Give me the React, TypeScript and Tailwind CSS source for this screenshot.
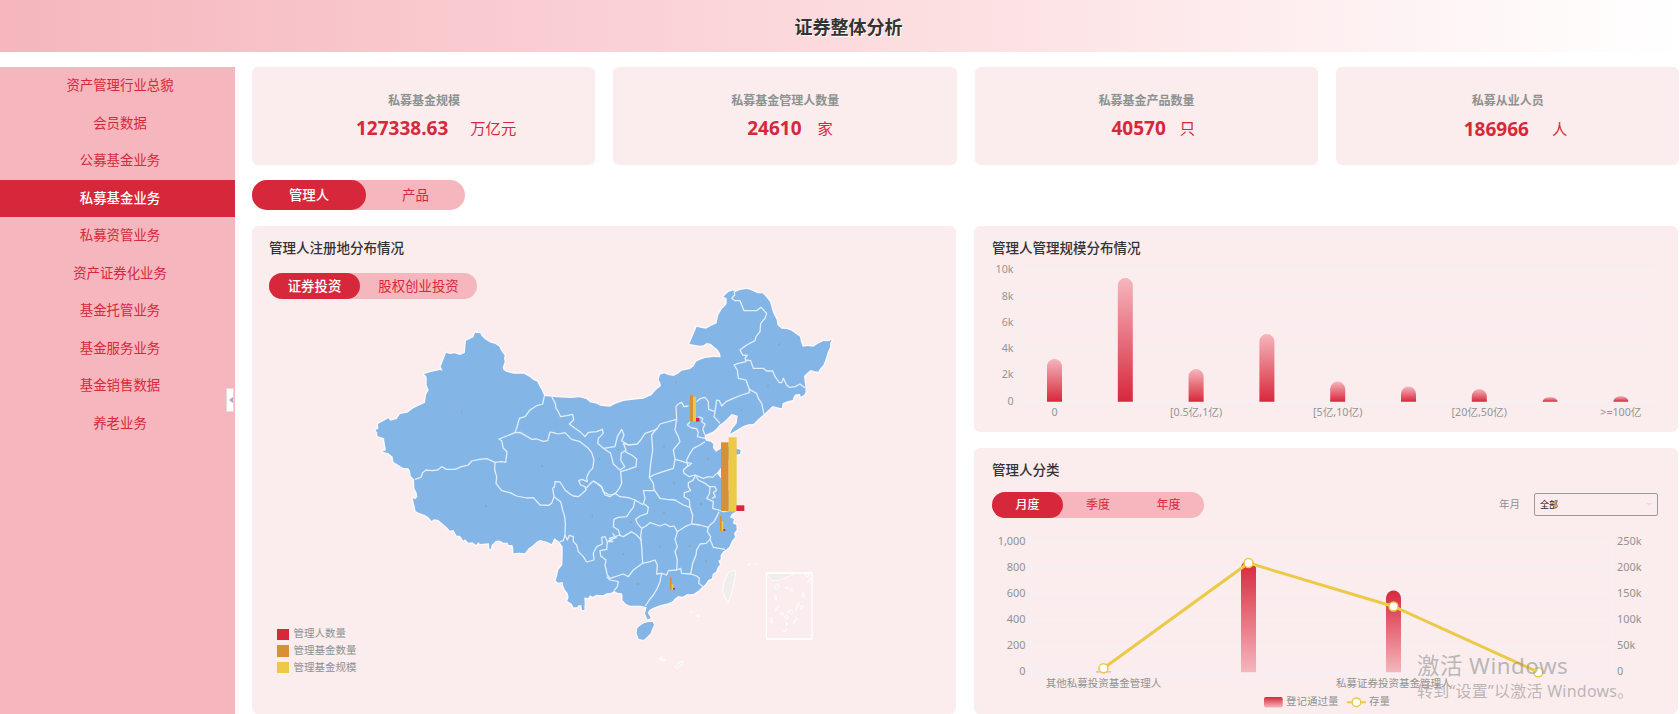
import { useState } from "react";
import clsx from "clsx";

const NAV_ITEMS = [
  "资产管理行业总貌",
  "会员数据",
  "公募基金业务",
  "私募基金业务",
  "私募资管业务",
  "资产证券化业务",
  "基金托管业务",
  "基金服务业务",
  "基金销售数据",
  "养老业务",
];

const STATS = [
  { title: "私募基金规模", value: "127338.63", unit: "万亿元", row: "pl-[104px] gap-[22px]" },
  { title: "私募基金管理人数量", value: "24610", unit: "家", row: "pl-[134px] gap-[16px]" },
  { title: "私募基金产品数量", value: "40570", unit: "只", row: "pl-[137px] gap-[14px]" },
  { title: "私募从业人员", value: "186966", unit: "人", row: "pl-[128px] pt-px gap-[23px]" },
];

// Map geometry uses its own units, three per screen pixel.
const MAINLAND =
  "315,188 331,190 335,198 345,208 362,218 375,221 388,230 394,243 404,256 402,265 404,275 398,292 400,299 408,305 430,311 462,311 480,322 490,330 502,335 508,348 515,360 523,378 560,382 600,384 630,382 650,388 660,397 680,401 690,407 720,410 735,402 760,393 790,389 820,386 845,375 853,365 860,358 873,348 871,338 866,330 870,314 882,310 895,315 910,318 924,311 935,302 960,297 971,289 978,275 990,269 1005,264 1030,261 1052,262 1050,250 1042,238 1032,230 1022,221 1010,219 1000,226 990,227 972,224 958,222 964,208 972,190 980,170 992,173 1008,176 1022,168 1040,160 1042,148 1045,135 1055,118 1070,102 1070,85 1060,80 1075,66 1092,60 1096,66 1110,60 1130,57 1140,59 1150,64 1163,70 1178,70 1188,80 1200,95 1205,114 1210,130 1220,150 1222,165 1235,176 1250,177 1265,182 1278,192 1290,200 1292,212 1298,230 1314,228 1330,230 1342,222 1360,213 1372,214 1385,210 1380,220 1380,232 1372,250 1366,270 1360,285 1350,296 1345,305 1334,304 1322,300 1312,308 1302,318 1304,336 1307,355 1306,368 1302,375 1292,380 1290,372 1278,373 1272,378 1268,390 1252,394 1238,400 1235,415 1222,412 1208,408 1195,420 1182,433 1165,447 1150,462 1135,463 1120,468 1100,480 1080,492 1086,478 1100,460 1103,437 1085,432 1070,448 1058,458 1048,465 1038,478 1028,485 1005,495 1004,503 1008,512 1022,515 1030,522 1029,534 1038,545 1052,536 1062,528 1080,530 1100,536 1112,540 1110,552 1090,556 1070,575 1055,590 1046,602 1040,610 1053,625 1060,640 1072,655 1085,680 1095,705 1098,724 1085,733 1080,742 1092,748 1088,760 1099,765 1100,780 1092,790 1095,802 1086,812 1078,830 1070,838 1060,844 1052,855 1052,868 1045,872 1050,884 1043,892 1038,905 1028,912 1026,925 1015,930 1005,944 994,953 985,962 970,972 950,973 938,980 925,978 912,988 910,992 895,1000 872,1005 850,1013 838,1020 833,1028 843,1045 832,1048 825,1030 830,1012 812,1007 780,1007 768,1002 757,990 758,978 755,970 742,968 732,962 724,968 710,970 700,976 680,974 668,980 660,976 654,985 643,982 644,1000 643,1020 636,1020 634,1006 625,1006 622,1012 610,1012 606,1002 592,993 596,982 593,970 584,958 580,948 578,936 565,938 557,932 562,915 565,900 577,885 578,860 578,830 568,815 560,810 553,805 545,822 530,815 510,810 500,815 490,825 476,835 465,850 448,848 430,850 430,835 427,825 415,825 413,818 400,818 390,812 378,812 365,825 362,838 358,836 357,820 330,822 325,817 318,825 308,817 295,818 285,808 280,812 270,797 260,797 250,780 240,782 232,773 220,763 205,750 192,748 185,753 175,742 165,735 148,729 137,724 133,705 128,685 136,688 142,680 140,668 133,655 132,628 122,618 120,602 115,595 100,594 90,588 70,575 68,560 55,550 38,545 48,540 45,525 42,505 22,498 22,488 16,480 25,476 24,462 40,453 55,445 62,452 80,447 90,432 112,428 130,415 165,398 168,375 176,360 170,345 170,320 162,312 185,305 210,300 218,302 212,290 220,270 228,248 240,252 254,250 270,255 285,248 286,230 288,212 310,202";

const HAINAN =
  "822,1060 835,1056 848,1056 852,1064 846,1078 842,1090 828,1104 820,1110 806,1106 800,1090 802,1074 812,1066";

const TAIWAN = "1088,902 1097,903 1096,920 1088,955 1082,980 1073,1000 1066,984 1058,965 1060,940 1070,915 1078,905";

const BORDERS = [
  "135,628 153,622 158,608 168,600 185,602 203,600 215,590 230,598 255,598 275,590 295,585 305,573 328,568 350,566 375,577 395,575 407,577 411,545 400,535 395,512 387,507 410,498 435,488 442,468 448,445 465,440 480,420 500,407 518,402 523,378",
  "435,488 450,487 462,494 485,508 500,507 520,514 533,512 540,486 550,488 565,492 585,488 605,508 630,515 655,535 665,548 672,570 668,595 658,605 650,622 652,635 636,628 626,632 632,645 645,650 648,660 635,672 625,680 610,678 600,672 585,660 578,648 570,636 555,635 554,650 548,655 552,680 545,700 535,706 510,705 490,683 470,684 440,678 420,668 395,662 378,640 380,620 374,600 375,577",
  "545,380 556,400 558,415 565,425 572,440 590,437 608,433 611,450 598,462 615,475 630,485 645,500 655,487 680,485 697,478 700,490 685,505 683,520 700,535 735,530",
  "700,535 722,550 730,582 750,600 764,590 752,570 754,550 768,540 760,520 775,525 802,522 812,510 825,490 860,478 870,462 920,448",
  "735,530 742,500 755,478 762,495 755,512 775,525",
  "765,545 785,555 800,567 798,590 775,598 752,605 755,640 748,655 735,672 718,675 700,665 695,652 680,640 670,633 660,642 648,655",
  "670,633 690,645 695,650 705,675 720,680 735,670 750,680 775,683 795,690 790,712 780,725 770,740 745,742 732,748 730,770 745,780 750,795 735,800 728,790",
  "860,475 845,495 848,540 842,580 838,622 850,640 852,658 870,685 890,688 915,690 940,705 960,712 968,735 965,762",
  "838,622 850,615 870,608 910,595 915,568 910,540 930,515 925,500 915,480 920,448 918,410 925,402 935,397 942,410 955,408",
  "980,395 990,386 1005,382 1015,395 1016,418 1035,425 1032,440 1050,460",
  "1035,425 1040,390 1048,392 1055,408 1068,395 1090,385 1115,375 1138,368 1138,358",
  "915,568 930,572 948,578 965,580 952,590",
  "1005,515 990,525 970,535 960,550 950,570 953,588 940,600 942,610 958,620 975,615 1000,625 1015,620 1028,622 1040,610",
  "975,620 968,632 955,638 955,650 962,662 943,668 942,680 958,690 960,712",
  "975,615 985,630 1005,640 1020,652 1018,672 1010,685 1030,695 1028,715 1045,720 1060,725 1075,722 1098,722",
  "1020,650 1035,650 1040,662 1030,668 1036,680 1025,685",
  "965,762 990,765 1015,772 1020,765 1032,755 1040,740 1047,725",
  "1015,772 1012,785 1022,800 1020,808 1030,832 1065,838",
  "1020,808 1008,820 990,822 980,840 978,855 968,880 962,912",
  "853,662 820,662 825,685 820,700 835,712 832,730 810,738 797,748 802,760 815,775",
  "795,690 820,705",
  "815,775 828,768 840,758 870,768 885,762 900,770 912,768 922,785 945,770 965,762",
  "815,775 812,800 815,830 818,880 840,875 855,870 862,885 860,912 875,910 870,935 862,955 850,975 838,990 826,1008",
  "922,785 918,800 915,808 922,830 915,845 922,870 920,900 895,902 890,915 875,910",
  "920,900 932,895 935,910 962,912 980,918 988,925 986,940 1000,950",
  "745,795 760,800 785,785 800,795 815,812",
  "740,802 725,808 712,815 710,838 690,842 692,858 708,870 705,885 712,915 720,925 760,912 775,920 790,900 818,880",
  "710,920 720,930 745,935 742,950 732,962",
  "735,800 718,805 728,815 712,815 705,800 695,802 697,822 680,830 670,850 672,870 650,876 640,860 625,845 620,825 610,815 610,800 598,796 592,810 585,795",
  "552,680 572,695 578,720 584,740 586,760 585,795 580,812 570,815",
  "1092,60 1094,75 1085,85 1095,92 1110,92 1122,122 1160,122 1173,112 1190,130 1185,145 1172,160 1170,185 1158,200 1155,212 1130,225 1110,240 1118,255 1132,256 1125,264 1128,275 1105,280 1092,285 1102,300 1105,325 1128,330 1138,358 1160,370 1165,385 1175,400 1182,433",
  "1126,270 1142,272 1150,295 1180,295 1190,303 1208,303 1215,320 1228,338 1235,338 1240,325 1250,345 1258,352 1275,350 1290,342 1307,355",
  "960,455 952,465 965,474 980,476 985,488 982,500 1005,505",
  "985,440 998,445 995,455 1005,462 998,478 1005,495",
];

// x, y, width, height in map units
const MAP_BARS = [
  { orange: [960, 376, 10, 78], yellow: [969, 380, 9, 74], red: [978, 444, 10, 11] },
  { orange: [1053, 517, 23, 206], yellow: [1076, 502, 24, 221], red: [1099, 706, 24, 17] },
  { orange: [1050, 738, 5, 45], yellow: [1055, 754, 5, 29], red: [1060, 777, 6, 6] },
  { orange: [900, 922, 5, 37], yellow: [905, 942, 5, 17], red: [909, 954, 6, 5] },
];

const MAP_DOTS = [
  [276, 425], [517, 588], [688, 567], [667, 737], [348, 708], [745, 540], [882, 530], [805, 601],
  [912, 640], [1013, 566], [1042, 665], [993, 702], [882, 728], [782, 756], [870, 829], [959, 828],
  [1009, 874], [760, 852], [804, 942], [825, 1077], [1228, 223], [1194, 349], [1114, 420], [918, 337], [994, 477],
];

const ISLETS = [
  "1214,948 1226,942 1228,950 1218,958 1214,956",
  "1245,953 1252,950 1254,956 1248,956",
  "1258,960 1266,956 1268,962 1260,964",
  "1214,980 1218,976 1220,990 1215,988",
  "1215,1020 1226,1008 1228,1012 1217,1022",
  "1201,1046 1206,1044 1209,1057 1203,1056",
  "1278,1010 1288,998 1284,1012 1276,1022",
  "1298,968 1303,966 1302,982 1297,980",
  "1312,938 1320,924 1322,930 1314,938",
  "1304,912 1312,922 1319,912",
  "1269,1060 1280,1042 1281,1048 1272,1060",
  "1240,1084 1250,1078 1250,1083 1242,1086",
  "1230,1030 1238,1026 1240,1032 1233,1035",
  "1252,1024 1262,1020 1272,1026 1264,1034",
  "1242,1042 1250,1036 1258,1042 1250,1046",
  "1248,1058 1252,1060 1250,1066",
  "1290,1010 1300,1006 1300,1012 1292,1018",
  "914,1192 924,1180 938,1174 940,1182 928,1190 918,1196",
  "865,1165 878,1162 874,1170 888,1168 880,1174",
  "1132,884 1138,880 1138,886",
  "1155,880 1158,880 1158,884",
  "962,1026 966,1026 966,1029",
  "980,1036 986,1034 987,1040 982,1041",
];

type BarBox = number[];

function MapBar({ box, fill }: { box: BarBox; fill: string }) {
  return <rect x={box[0]} y={box[1]} width={box[2]} height={box[3]} fill={fill} />;
}

function ChinaMap() {
  return (
    <svg viewBox="0 9 1440 1323" className="h-[441px] w-[480px] shrink-0">
      <g strokeLinejoin="round">
        {/* stroke goes under the fill so the coast keeps a thin outer halo */}
        <polygon points={MAINLAND} fill="#83b6e7" stroke="#fdf8fb" strokeWidth="8" paintOrder="stroke" />
        <polygon points={HAINAN} fill="#83b6e7" stroke="#fdf8fb" strokeWidth="6" paintOrder="stroke" />
        <polygon points={TAIWAN} fill="#efeeed" stroke="#fff" strokeWidth="3" />
        {BORDERS.map((line) => (
          <polyline key={line} points={line} fill="none" stroke="#e3eefa" strokeWidth="3.8" />
        ))}
        <path d="M1190 910 H1275 Q1250 922 1230 930 L1205 932 Z" fill="#efeeed" stroke="#fff" strokeWidth="2" />
        <rect x="1189" y="909" width="137" height="198" fill="none" stroke="#fff" strokeWidth="4" />
        {ISLETS.map((p) => (
          <polygon key={p} points={p} fill="#f6f0ee" stroke="#fff" strokeWidth="2.5" />
        ))}
      </g>
      {MAP_DOTS.map(([x, y]) => (
        <rect key={`${x}-${y}`} x={x - 2} y={y - 3} width="4" height="6" fill="#a09a94" opacity="0.85" />
      ))}
      {MAP_BARS.map((bar) => (
        <g key={bar.orange[0]}>
          <MapBar box={bar.orange} fill="#d98f33" />
          <MapBar box={bar.yellow} fill="#ecc947" />
          <MapBar box={bar.red} fill="#d7283b" />
        </g>
      ))}
    </svg>
  );
}

/** Bar with a rounded top, clamped so very short bars stay a flat cap. */
function barPath(cx: number, top: number, bottom: number, width = 15) {
  const r = width / 2;
  const ry = Math.min(r, bottom - top);
  return `M${cx - r} ${bottom} V${top + ry} A${r} ${ry} 0 0 1 ${cx + r} ${top + ry} V${bottom} Z`;
}

const SCALE_BARS = [
  { top: 359, label: "0" },
  { top: 278, label: "" },
  { top: 369, label: "[0.5亿,1亿)" },
  { top: 334, label: "" },
  { top: 381.5, label: "[5亿,10亿)" },
  { top: 386.5, label: "" },
  { top: 389, label: "[20亿,50亿)" },
  { top: 397, label: "" },
  { top: 396, label: ">=100亿" },
];

function ScaleChart() {
  return (
    <svg viewBox="974 262 704 170" className="h-[170px] w-[704px] text-[10.7px]">
      <defs>
        <linearGradient id="scaleBar" x1="0" y1="0" x2="0" y2="1">
          <stop offset="0" stopColor="#f5b6bd" />
          <stop offset="1" stopColor="#d7283b" />
        </linearGradient>
      </defs>
      {["10k", "8k", "6k", "4k", "2k", "0"].map((label, i) => (
        <g key={label}>
          <line x1="1019.5" x2="1655.5" y1={270.2 + i * 26.3} y2={270.2 + i * 26.3} stroke="#f4f1f6" strokeWidth="1.5" />
          <text x="1013.5" y={273.2 + i * 26.3} textAnchor="end" fill="#929895">
            {label}
          </text>
        </g>
      ))}
      <line x1="1019.5" x2="1019.5" y1="270" y2="402" stroke="#f4f1f6" strokeWidth="1.5" />
      {SCALE_BARS.map((bar, i) => (
        <g key={bar.top}>
          <path d={barPath(1054.5 + i * 70.8, bar.top, 401.7)} fill="url(#scaleBar)" />
          <text x={1054.5 + i * 70.8} y="416" textAnchor="middle" fill="#929895">
            {bar.label}
          </text>
        </g>
      ))}
    </svg>
  );
}

const LEFT_TICKS = ["1,000", "800", "600", "400", "200", "0"];
const RIGHT_TICKS = ["250k", "200k", "150k", "100k", "50k", "0"];
const LINE_POINTS = [
  [1103.5, 668.3],
  [1248.5, 563],
  [1393.5, 606.5],
  [1538.3, 672.2],
];

function CategoryChart() {
  return (
    <svg viewBox="974 518 704 196" className="h-[196px] w-[704px] text-[10.5px]">
      <defs>
        <linearGradient id="categoryBar" x1="0" y1="0" x2="0" y2="1">
          <stop offset="0" stopColor="#d7283b" />
          <stop offset="1" stopColor="#f5b6bd" />
        </linearGradient>
      </defs>
      {LEFT_TICKS.map((label, i) => {
        const y = 542.3 + i * 26;
        return (
          <g key={label} fill="#8e9491" className="text-[10.9px]">
            <line x1="1031.5" x2="1611" y1={y} y2={y} stroke="#f4f1f6" strokeWidth="1.5" />
            <text x="1025.5" y={y + 2.7} textAnchor="end">
              {label}
            </text>
            <text x="1617" y={y + 2.7}>
              {RIGHT_TICKS[i]}
            </text>
          </g>
        );
      })}
      <path d="M1031.5 542 V673 M1611 542 V673" stroke="#f4f1f6" strokeWidth="1.5" />
      <rect x="1096" y="671.4" width="15" height="1" fill="#ee9aa3" />
      <path d={barPath(1248.5, 560.5, 672.3)} fill="url(#categoryBar)" />
      <path d={barPath(1393.5, 590.5, 672.3)} fill="url(#categoryBar)" />
      <polyline points={LINE_POINTS.join(" ")} fill="none" stroke="#ecc947" strokeWidth="3" />
      {LINE_POINTS.map(([x, y]) => (
        <circle key={x} cx={x} cy={y} r="4.5" fill="#fff" stroke="#ecc947" strokeWidth="1.5" />
      ))}
      <g fill="#8e9491">
        <text x="1103.5" y="686.5" textAnchor="middle">
          其他私募投资基金管理人
        </text>
        <text x="1393.8" y="686.5" textAnchor="middle">
          私募证券投资基金管理人
        </text>
        <text x="1286" y="705">登记通过量</text>
        <text x="1369" y="705">存量</text>
      </g>
      <rect x="1264" y="697" width="18.7" height="10.5" rx="2" fill="url(#categoryBar)" />
      <line x1="1347" x2="1366" y1="702.3" y2="702.3" stroke="#ecc947" strokeWidth="2" />
      <circle cx="1356.5" cy="702.3" r="4.3" fill="#fff" stroke="#ecc947" strokeWidth="1.5" />
    </svg>
  );
}

interface PillTabsProps {
  tabs: { label: string; width: string }[];
  className: string;
}

function PillTabs({ tabs, className }: PillTabsProps) {
  const [active, setActive] = useState(0);
  return (
    <div className={clsx("flex w-max shrink-0 rounded-full bg-[#f5b6bd]", className)}>
      {tabs.map((tab, i) => (
        <button
          key={tab.label}
          type="button"
          onClick={() => setActive(i)}
          className={clsx(
            "h-full rounded-full whitespace-nowrap",
            tab.width,
            i === active ? "bg-[#d7283b] font-medium text-white" : "text-[#d7283b]",
          )}
        >
          {tab.label}
        </button>
      ))}
    </div>
  );
}

function PanelTitle({ children }: { children: string }) {
  return <h2 className="text-[13.5px] leading-5 font-medium text-[#333]">{children}</h2>;
}

const MAP_LEGEND = [
  { label: "管理人数量", color: "bg-[#d7283b]" },
  { label: "管理基金数量", color: "bg-[#d98f33]" },
  { label: "管理基金规模", color: "bg-[#ecc947]" },
];

export default function App() {
  const [activeNav, setActiveNav] = useState(3);

  return (
    <div className="relative flex h-[714px] w-[1680px] flex-col gap-[15px] overflow-hidden bg-white font-['Noto_Sans','Noto_Sans_CJK_SC',sans-serif]">
      <header className="flex h-[52px] shrink-0 items-center justify-center bg-linear-to-r from-[#f5b6bd] to-white pt-[2px] pl-[17px]">
        <h1 className="text-[18px] leading-none font-bold text-[#333] [text-shadow:1px_1px_0_#fff]">证券整体分析</h1>
      </header>

      <div className="flex min-h-0 flex-1">
        <nav className="relative w-[235px] shrink-0 bg-[#f5b6bd]">
          {NAV_ITEMS.map((item, i) => (
            <button
              key={item}
              type="button"
              onClick={() => setActiveNav(i)}
              className={clsx(
                "flex h-[37.5px] w-full items-center justify-center pr-px pb-px pl-[6px] text-[13.4px]",
                i === activeNav ? "bg-[#d7283b] font-medium text-white" : "text-[#d7283b]",
              )}
            >
              {item}
            </button>
          ))}
          <div className="absolute top-[321px] right-px flex h-6 w-2 items-center justify-end border border-[#ddd] bg-white">
            <span className="border-y-[3px] border-r-4 border-y-transparent border-r-[#a9a9b8]" />
          </div>
        </nav>

        <main className="box-content flex w-[1427px] shrink-0 flex-col pl-[17px]">
          <section className="grid h-[98px] shrink-0 grid-cols-4 gap-[18px]">
            {STATS.map((stat) => (
              <div key={stat.title} className="rounded-md bg-[#fbeced] pt-[25px]">
                <div className="pl-px text-center text-[12px] leading-[18px] font-bold text-[#8a9391]">
                  {stat.title}
                </div>
                <div className={clsx("mt-[6px] flex items-center text-[#d7283b]", stat.row)}>
                  <span className="text-[19px] leading-6 font-bold">{stat.value}</span>
                  <span className="text-[15.3px] leading-6">{stat.unit}</span>
                </div>
              </div>
            ))}
          </section>

          <PillTabs
            className="mt-[15px] h-[30px] text-[13.4px]"
            tabs={[
              { label: "管理人", width: "w-[114px]" },
              { label: "产品", width: "w-[99px]" },
            ]}
          />

          <div className="mt-4 flex gap-[18px]">
            <section className="flex h-[488px] w-[704px] shrink-0 flex-col rounded-md bg-[#fbeced] pt-[12px] pl-[17px]">
              <PanelTitle>管理人注册地分布情况</PanelTitle>
              <div className="mt-[15px] flex">
                <div className="relative z-10 flex w-[101px] flex-col justify-between">
                  <PillTabs
                    className="h-[26px] text-[13.4px]"
                    tabs={[
                      { label: "证券投资", width: "w-[91px]" },
                      { label: "股权创业投资", width: "w-[117px]" },
                    ]}
                  />
                  <ul className="mb-[38px] pl-2 text-[10.5px] text-[#8a9391]">
                    {MAP_LEGEND.map((entry) => (
                      <li key={entry.label} className="flex h-[16.7px] items-center gap-[5px] whitespace-nowrap">
                        <span className={clsx("h-[11.5px] w-[11.5px] shrink-0", entry.color)} />
                        {entry.label}
                      </li>
                    ))}
                  </ul>
                </div>
                <ChinaMap />
              </div>
            </section>

            <div className="flex w-[704px] shrink-0 flex-col gap-4">
              <section className="h-[206px] rounded-md bg-[#fbeced]">
                <div className="h-9 pt-3 pl-[18px]">
                  <PanelTitle>管理人管理规模分布情况</PanelTitle>
                </div>
                <ScaleChart />
              </section>

              <section className="h-[266px] rounded-md bg-[#fbeced]">
                <div className="h-11 pt-3 pl-[18px]">
                  <PanelTitle>管理人分类</PanelTitle>
                </div>
                <div className="flex h-[26px] justify-between pr-[20px] pl-[18px]">
                  <PillTabs
                    className="h-[26px] text-[12px]"
                    tabs={[
                      { label: "月度", width: "w-[71px]" },
                      { label: "季度", width: "w-[70px]" },
                      { label: "年度", width: "w-[71px]" },
                    ]}
                  />
                  <label className="flex items-center gap-[14px] pb-px text-[10.5px] text-[#8a9391]">
                    年月
                    <span className="flex h-[23px] w-[124px] items-center justify-between rounded-[2px] border border-[#979c99] px-[5px] text-[9px] text-[#222]">
                      全部
                      <span className="border-x-[3px] border-t-[3px] border-x-transparent border-t-[#e4dfe2]" />
                    </span>
                  </label>
                </div>
                <CategoryChart />
              </section>
            </div>
          </div>
        </main>
      </div>

      {/* OS activation notice floats over the page */}
      <div className="pointer-events-none absolute top-[651px] left-[1417px] whitespace-nowrap text-[#969696]/65">
        <div className="text-[22.4px] leading-[30px] tracking-[0.5px]">激活 Windows</div>
        <div className="text-[16px] leading-[20px] tracking-[0.25px]">转到“设置”以激活 Windows。</div>
      </div>
    </div>
  );
}
